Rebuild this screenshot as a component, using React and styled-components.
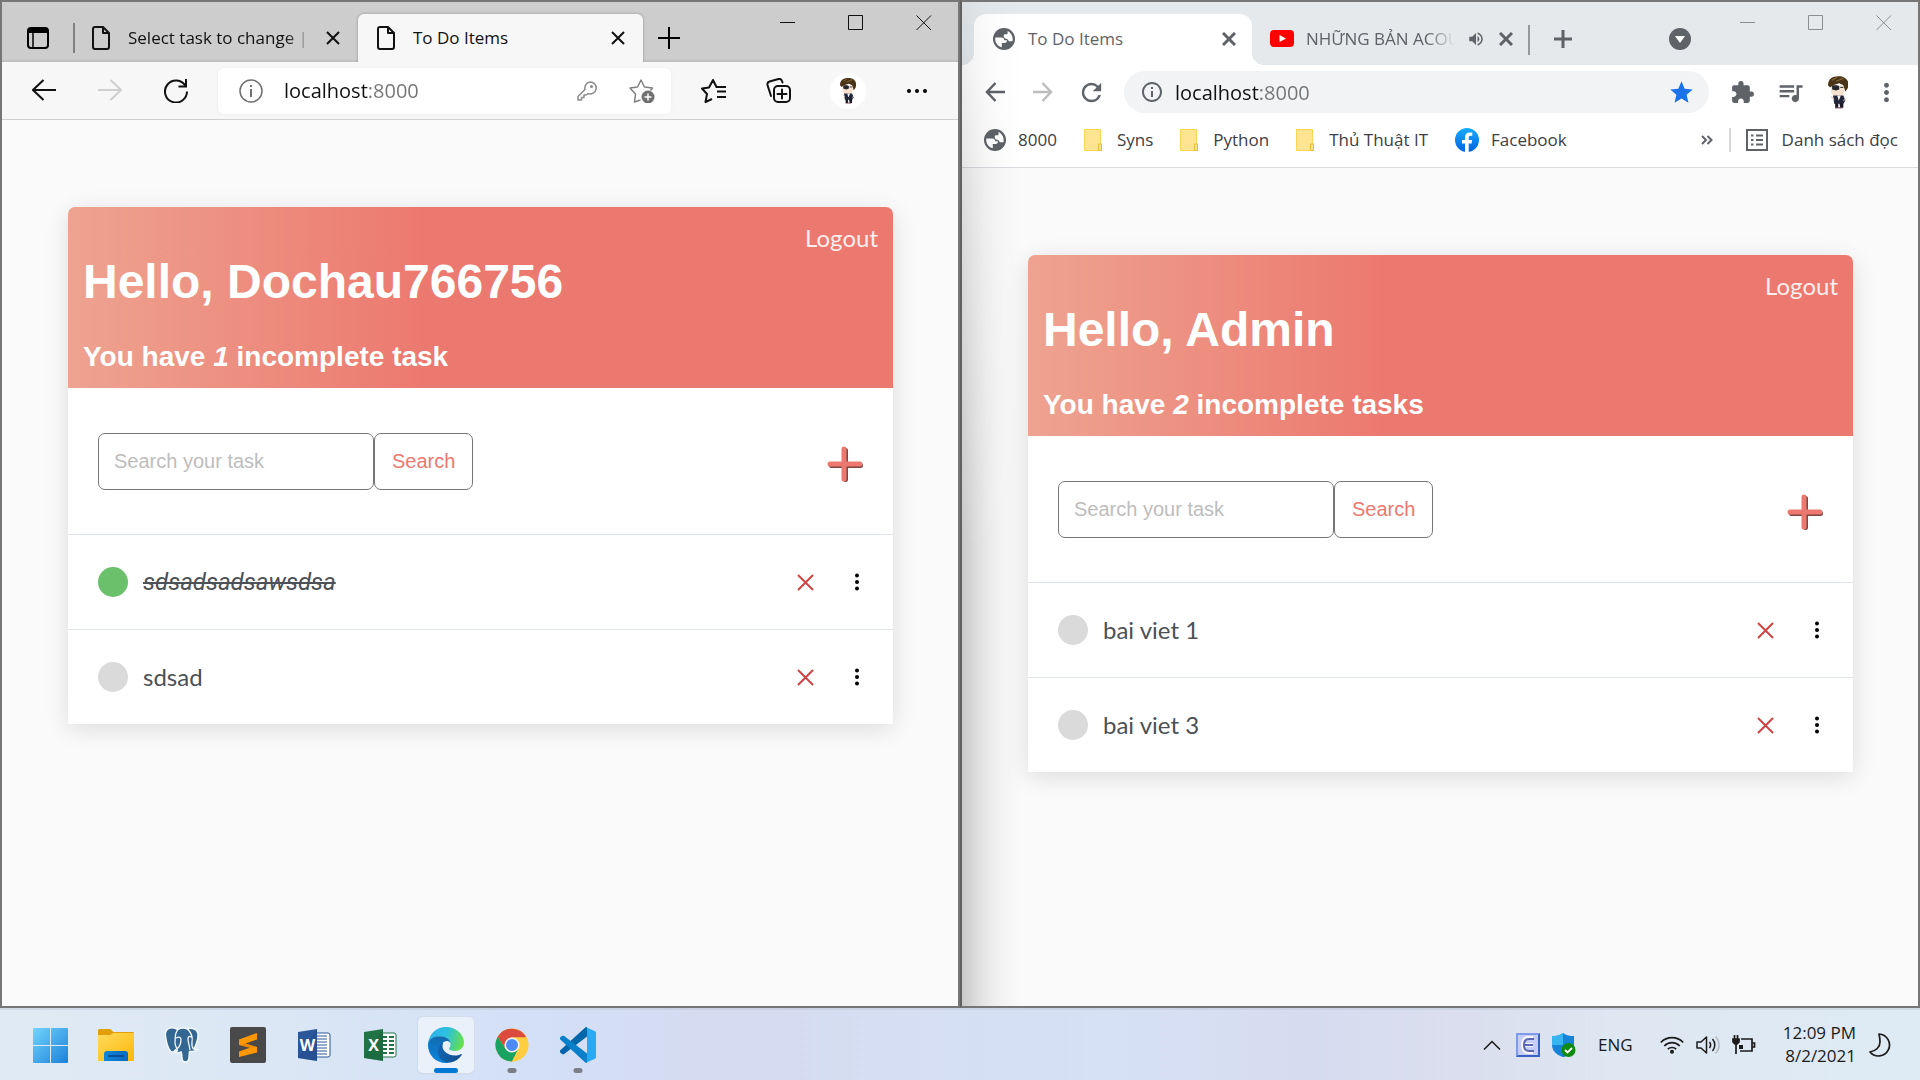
import React from 'react';
import styled, { createGlobalStyle, css } from 'styled-components';
import {
  MdInfoOutline, MdStar, MdExtension, MdQueueMusic, MdMoreVert, MdRefresh, MdVolumeUp,
} from 'react-icons/md';

const uiFont = '"Open Sans", "Noto Sans", sans-serif';
const headingFont = '"Liberation Sans", Arial, sans-serif';
const bodyFont = 'Lato, "Open Sans", sans-serif';

const GlobalStyle = createGlobalStyle`
  *, *::before, *::after { box-sizing: border-box; }
  body { margin: 0; font-family: ${uiFont}; background: #fafafa; }
  button, input { font: inherit; color: inherit; }
  button { border: 0; background: none; padding: 0; cursor: pointer; }
  svg { display: block; flex: none; }
  h1, h2 { margin: 0; }
  a { color: inherit; text-decoration: none; }
`;

/* ---------- desktop ---------- */

const Desktop = styled.div`
  display: flex;
  flex-direction: column;
  min-height: 100vh;
`;

const Windows = styled.main`
  display: grid;
  grid-template-columns: 1fr 1fr;
  flex: 1;
`;

const Window = styled.section`
  position: relative;
  display: flex;
  flex-direction: column;
  min-width: 0;
  border: 2px solid #767676;
  background: #fafafa;
  ${(p) => p.$behind && css`
    border-left-color: #616161;
    &::after {
      content: '';
      position: absolute;
      inset: 0 auto 0 0;
      width: 60px;
      pointer-events: none;
      background: linear-gradient(90deg, rgba(0,0,0,.2), rgba(0,0,0,.13) 12px, rgba(0,0,0,.07) 24px, rgba(0,0,0,.03) 38px, transparent);
      mask-image: linear-gradient(rgba(0,0,0,.2), rgba(0,0,0,.6) 20%, #000 55%);
    }
  `}
`;

const IconButton = styled.button`
  display: flex;
  align-items: center;
  justify-content: center;
  flex: none;
  width: ${(p) => p.$w}px;
  height: 42px;
  color: ${(p) => p.$color || 'inherit'};
`;

const Controls = styled.div`
  display: flex;
  align-self: flex-start;
  margin-left: auto;
  color: ${(p) => p.$color};
`;

const TabTitle = styled.span`
  flex: 1;
  min-width: 0;
  white-space: nowrap;
  font-size: 17px;
  line-height: 24px;
  text-align: left;
  ${(p) => p.$fade && css`mask-image: linear-gradient(90deg, #000 calc(100% - 28px), transparent);`}
`;

const TabClose = styled.button`
  display: flex;
  align-items: center;
  justify-content: center;
  flex: none;
  width: 18px;
  height: 18px;
`;

const Address = styled.form`
  display: flex;
  align-items: center;
  flex: 1;
  min-width: 0;
`;

const AddressInput = styled.input`
  flex: 1;
  min-width: 0;
  border: 0;
  outline: 0;
  padding: 0;
  height: 32px;
  font-size: 20px;
  background: linear-gradient(90deg, #111 ${(p) => p.$host}px, #747474 ${(p) => p.$host}px) text;
  -webkit-text-fill-color: transparent;
`;

/* ---------- Edge chrome ---------- */

const EdgeStrip = styled.header`
  display: flex;
  align-items: flex-end;
  height: 60px;
  background: #cdcdcd;
  box-shadow: inset 0 -2px 1px #c0c0c0;
`;

const EdgePanelButton = styled(IconButton)`
  height: 48px;
`;

const EdgeTab = styled.div`
  display: flex;
  align-items: center;
  gap: 17px;
  width: 285px;
  height: 48px;
  padding: 0 16px 0 18px;
  color: #111;
  ${(p) => p.$active && css`
    background: #f7f7f7;
    border-radius: 6px 6px 0 0;
    box-shadow: 0 0 3px rgba(0,0,0,.3);
    clip-path: inset(-4px -4px 0);
  `}
  ${(p) => p.$divided && css`
    background: linear-gradient(#808080, #808080) 0 9px / 2px 30px no-repeat;
  `}
`;

const EdgeTabTitle = styled(TabTitle)`
  margin-right: -6px;
`;

const EdgeToolbar = styled.nav`
  display: flex;
  align-items: center;
  height: 58px;
  padding: 0 8px 0 9px;
  background: #f7f7f7;
  border-bottom: 1px solid #d0d0d0;
  color: #111;
`;

const EdgeAddress = styled(Address)`
  height: 46px;
  margin: 0 9px;
  border-radius: 6px;
  background: #fff;
  box-shadow: 0 0 3px rgba(0,0,0,.06);
`;

const EdgeAvatar = styled.span`
  display: flex;
  align-items: center;
  justify-content: center;
  width: 36px;
  height: 36px;
  border-radius: 50%;
  background: #fff;
`;

/* ---------- Chrome chrome ---------- */

const ChromeStrip = styled.header`
  display: flex;
  align-items: flex-end;
  height: 63px;
  padding-left: 12px;
  background: #e5e9ec;
  color: #5f6368;
`;

const ChromeTab = styled.div`
  position: relative;
  display: flex;
  align-items: center;
  gap: 13px;
  width: 278px;
  height: 51px;
  padding: 0 14px 2px 19px;
  ${(p) => p.$active ? css`
    background: #fff;
    border-radius: 12px 12px 0 0;
    &::before, &::after {
      content: '';
      position: absolute;
      bottom: 0;
      width: 12px;
      height: 12px;
    }
    &::before { right: 100%; background: radial-gradient(circle at 0 0, transparent 12px, #fff 12px); }
    &::after { left: 100%; background: radial-gradient(circle at 100% 0, transparent 12px, #fff 12px); }
  ` : css`
    gap: 12px;
    padding: 0 15px 2px 18px;
    background: linear-gradient(#96999c, #96999c) 100% 11px / 2px 30px no-repeat;
  `}
`;

const ChromeStripButton = styled(IconButton)`
  height: 49px;
  margin: 0 0 2px ${(p) => p.$gap || 0}px;
`;

const ChromeToolbar = styled.nav`
  display: flex;
  align-items: center;
  height: 54px;
  padding: 0 8px 0 9px;
  background: #fff;
  color: #5f6368;
`;

const ChromeAddress = styled(Address)`
  gap: 11px;
  height: 42px;
  margin: 0 9px;
  padding: 0 16px;
  border-radius: 21px;
  background: #f1f3f4;
`;

const Bookmarks = styled.nav`
  display: flex;
  align-items: center;
  gap: 27px;
  height: 49px;
  padding: 0 20px 6px 22px;
  background: #fff;
  border-bottom: 1px solid #dadce0;
  color: #5f6368;
  white-space: nowrap;
`;

const Bookmark = styled.a`
  display: flex;
  align-items: center;
  gap: 12px;
  font-size: 17px;
  line-height: 24px;
`;

const BookmarkName = styled.span`
  color: #3c4043;
`;

const BookmarksEnd = styled.div`
  display: flex;
  align-items: center;
  gap: 16px;
  margin-left: auto;
`;

const ReadingList = styled(Bookmark)`
  gap: 14px;
  padding-left: 15px;
  border-left: 2px solid #d5d7da;
`;

/* ---------- to-do page ---------- */

const Page = styled.div`
  padding: 87px 65px 87px 66px;
  font-family: ${bodyFont};
  font-size: 24px;
  line-height: 34px;
  color: #4b5156;
`;

const Card = styled.article`
  border-radius: 7px 7px 0 0;
  background: #fff;
  box-shadow: 0 5px 24px rgba(0,0,0,.12);
`;

const CardHeader = styled.header`
  display: flex;
  justify-content: space-between;
  align-items: flex-start;
  padding: 15px;
  border-radius: 7px 7px 0 0;
  background: linear-gradient(90deg, #eea390 0%, #ec796f 43%, #ec796f 100%);
  color: #fff;
`;

const Greeting = styled.div`
  display: flex;
  flex-direction: column;
  gap: 32px;
  padding-top: 32px;
  font-family: ${headingFont};
`;

const Title = styled.h1`
  font-size: 48px;
  line-height: 55px;
`;

const Subtitle = styled.h2`
  font-size: 28px;
  line-height: 32px;
`;

const Logout = styled.a`
  line-height: 32px;
  color: #fbeeec;
`;

const SearchRow = styled.div`
  display: flex;
  align-items: center;
  justify-content: space-between;
  padding: 45px 30px 44px;
`;

const SearchForm = styled.form`
  display: flex;
  font-family: ${headingFont};
  font-size: 20px;
  line-height: 23px;
`;

const fieldBox = css`
  border: 1px solid #767676;
  border-radius: 7px;
  background: #fff;
`;

const SearchInput = styled.input`
  ${fieldBox}
  width: 276px;
  padding: 16px 15px;
  &::placeholder { color: #bdbdbd; }
`;

const SearchButton = styled.button`
  ${fieldBox}
  padding: 16px 17px;
  color: #ec796f;
`;

const AddLink = styled.a`
  display: flex;
  padding-top: 4px;
`;

const TaskList = styled.ul`
  list-style: none;
  margin: 0;
  padding: 0;
`;

const Task = styled.li`
  display: flex;
  align-items: center;
  gap: 15px;
  padding: 30px;
  border-top: 1px solid #dee4e9;
`;

const TaskCheck = styled.input`
  appearance: none;
  flex: none;
  width: 30px;
  height: 30px;
  margin: 0;
  border-radius: 50%;
  background: #dadada;
  &:checked { background: #6bc06b; }
`;

const TaskLabel = styled.label`
  flex: 1;
  ${(p) => p.$done && css`
    font-family: Roboto, ${bodyFont};
    font-style: italic;
    text-decoration: line-through;
    text-decoration-thickness: 2px;
  `}
`;

const TaskActions = styled.div`
  display: flex;
  align-items: center;
  gap: 37px;
`;

const TaskButton = styled.button`
  display: flex;
  align-items: center;
  justify-content: center;
  width: 18px;
  height: 30px;
  &:last-child { width: 12px; }
`;

/* ---------- taskbar ---------- */

const Taskbar = styled.footer`
  display: flex;
  align-items: center;
  justify-content: space-between;
  height: 72px;
  padding: 0 28px 0 22px;
  background: linear-gradient(90deg, #dfeaf4 0%, #dbe7f4 14%, #d3e0f7 27%, #d5dbf1 38%, #d5def2 46%, #d6e1f5 58%, #d6dcf0 68%, #dadeee 76%, #dee7f2 84%, #deebf4 100%);
  border-top: 2px solid rgba(190,200,215,.5);
  color: #1b1b1b;
`;

const Apps = styled.div`
  display: flex;
  gap: 10px;
`;

const AppButton = styled.button`
  position: relative;
  display: flex;
  align-items: center;
  justify-content: center;
  width: 56px;
  height: 56px;
  border-radius: 5px;
  ${(p) => p.$focused && css`
    background: #eaf1fb;
    box-shadow: 0 0 0 1px #d3dcea, 0 1px 1px #b9c4d4;
  `}
  ${(p) => p.$running && css`
    &::after {
      content: '';
      position: absolute;
      bottom: 0;
      left: 50%;
      translate: -50% 0;
      width: ${p.$focused ? 24 : 9}px;
      height: 5px;
      border-radius: 3px;
      background: ${p.$focused ? '#0078d4' : '#7b7f88'};
    }
  `}
`;

const Tray = styled.div`
  display: flex;
  align-items: center;
  gap: 12px;
`;

const TrayButton = styled.button`
  display: flex;
  align-items: center;
  padding-right: ${(p) => p.$space || 0}px;
`;

const Language = styled.button`
  padding: 0 15px 0 10px;
  font-size: 17px;
  line-height: 24px;
`;

const Clock = styled.time`
  padding: 0 0 2px 15px;
  text-align: right;
  font-size: 17px;
  line-height: 23px;
`;

/* ---------- drawings ---------- */

const Line = ({ w = 24, h = w, box = `0 0 ${w} ${h}`, sw = 2, children, ...rest }) => (
  <svg width={w} height={h} viewBox={box} fill="none" stroke="currentColor" strokeWidth={sw} aria-hidden="true" {...rest}>
    {children}
  </svg>
);

const Cross = ({ size, sw, color }) => (
  <Line w={size} sw={sw} stroke={color || 'currentColor'}>
    <path d={`M1 1 ${size - 1} ${size - 1} M${size - 1} 1 1 ${size - 1}`} />
  </Line>
);

const PageIcon = () => (
  <Line w={20} h={26}>
    <path d="M12 2H4a2 2 0 0 0-2 2v18a2 2 0 0 0 2 2h12a2 2 0 0 0 2-2V8zV8h6" strokeLinejoin="round" />
  </Line>
);

const GlobeIcon = () => (
  <svg width="22" height="22" viewBox="0 0 22 22" aria-hidden="true">
    <circle cx="11" cy="11" r="11" fill="#5f6368" />
    <path d="M2.300 9.500h6c1.800 0 3 1.200 3 2.700H14c0 2-1.200 2.800-3.500 2.800H8.800v4.300C4.500 18.300 1.600 14.200 2.300 9.500z" fill="#fff" />
    <path d="M14.500 2.900C17.500 4.200 19.700 7.500 19.700 11c0 .8-.1 1.500-.3 2.200h-3.600c-.8-1.800-1.800-2.700-3.800-2.700-1.500-1.300-1.700-3-.7-4.300h2.200c1 0 1.300-.7 1-3.300z" fill="#fff" />
  </svg>
);

const Avatar = ({ h }) => (
  <svg width={h * 0.62} height={h} viewBox="0 0 20 32" aria-hidden="true">
    <path d="M3 9h13v8l-3 3H6l-3-3z" fill="#f6e2cf" />
    <path d="M0 9C0 3 4 0 10 0s10 3 10 8c0 3-1 5-3 7l-2-6-4-2-6 2-3 2z" fill="#4a3418" />
    <path d="M4 4l5-3M8 5l7-3" stroke="#8a6a36" />
    <path d="M4 9h5l2 1v3l-3 1-4-1z" fill="#26282c" />
    <path d="M12 11h3" stroke="#26282c" />
    <path d="M5 19h10l2 5-2 3H6z" fill="#22263c" />
    <path d="M9 19l1.500 5 2-5z" fill="#f4f4f4" />
    <path d="M3 20l3 3M15 24l3-2" stroke="#e9c9b5" />
    <path d="M7 26h3v5H7zM11 26h4v5h-3z" fill="#1c1d26" />
    <path d="M7 31h7" stroke="#5a3340" />
  </svg>
);

const WindowControls = ({ color }) => (
  <Controls $color={color}>
    <IconButton $w={68} aria-label="Minimize"><Line w={16} sw={1}><path d="M0 7.500h15" /></Line></IconButton>
    <IconButton $w={68} aria-label="Maximize"><Line w={16} sw={1}><path d="M.5 .5h14v14H.5z" /></Line></IconButton>
    <IconButton $w={68} aria-label="Close"><Line w={16} sw={1}><path d="M.5 .5l14.500 14.500M15 .5L.5 15" /></Line></IconButton>
  </Controls>
);

const FolderIcon = () => (
  <svg width="21" height="22" viewBox="0 0 21 22" aria-hidden="true">
    <path d="M0 0h17v14h1v8H0z" fill="#ffe591" />
    <path d="M0 .5h16.500v13.500M.5 0v21.500h14" fill="none" stroke="#f8d653" />
    <path d="M14.500 21.500v-6.500h3v6.500z" fill="#ffe591" stroke="#e9bd2f" />
  </svg>
);

const YoutubeIcon = () => (
  <svg width="24" height="17" viewBox="0 0 24 17" aria-hidden="true">
    <rect width="24" height="17" rx="4" fill="#f00" />
    <path d="M9.500 5v7l6.500-3.500z" fill="#fff" />
  </svg>
);

const FacebookIcon = () => (
  <svg width="24" height="24" viewBox="0 0 24 24" aria-hidden="true">
    <defs>
      <linearGradient id="fb" x2="0" y2="1"><stop stopColor="#18acfe" /><stop offset="1" stopColor="#0163e0" /></linearGradient>
    </defs>
    <circle cx="12" cy="12" r="12" fill="url(#fb)" />
    <path d="M10 24v-8.500H7V12h3V9.400C10 6.300 11.800 4.600 14.600 4.600c1.300 0 2.700.2 2.700.2v3h-1.600c-1.500 0-2 .9-2 1.900V12h3.400l-.5 3.500h-2.900V24a12 12 0 0 1-3.700 0z" fill="#fff" />
  </svg>
);

const ListIcon = () => (
  <Line w={22}>
    <path d="M1 1h20v20H1z" />
    <path d="M5 6.500h2.500M10 6.500h7M5 11h2.500M10 11h7M5 15.500h2.500M10 15.500h7" />
  </Line>
);

const StartIcon = () => (
  <svg width="35" height="35" viewBox="0 0 35 35" aria-hidden="true">
    <defs>
      <linearGradient id="win" x2="1" y2="1"><stop stopColor="#72d5fd" /><stop offset="1" stopColor="#1a80d8" /></linearGradient>
    </defs>
    <path d="M1 0h16v17H0V1a1 1 0 0 1 1-1zM18 0h16a1 1 0 0 1 1 1v16H18zM0 18h17v17H1a1 1 0 0 1-1-1zM18 18h17v16a1 1 0 0 1-1 1H18z" fill="url(#win)" />
  </svg>
);

const ExplorerIcon = () => (
  <svg width="36" height="33" viewBox="0 0 36 33" aria-hidden="true">
    <defs>
      <linearGradient id="fold" x2="1" y2="1"><stop stopColor="#ffd95c" /><stop offset="1" stopColor="#fcb90a" /></linearGradient>
      <linearGradient id="tray" x2="1"><stop stopColor="#0f86d8" /><stop offset="1" stopColor="#0a6abf" /></linearGradient>
    </defs>
    <path d="M0 1.500A1.500 1.500 0 0 1 1.500 0H12l3.500 3H35a1 1 0 0 1 1 1v8H0z" fill="#e09f0b" />
    <path d="M0 6h12l3.500-2H35a1 1 0 0 1 1 1v26a1 1 0 0 1-1 1H1a1 1 0 0 1-1-1z" fill="url(#fold)" />
    <path d="M6 32v-7a3 3 0 0 1 3-3h18a3 3 0 0 1 3 3v7z" fill="url(#tray)" />
    <path d="M11 27h14" stroke="#0a4c96" strokeWidth="2" strokeLinecap="round" />
  </svg>
);

const PostgresIcon = () => (
  <svg width="36" height="36" viewBox="0 0 36 36" aria-hidden="true">
    <path d="M6 1C2 2 1 5 1.500 9c.6 5 2 11 4.500 14.500 1.500 2 3 2 4.500.5l1-1.200 2 1c-1 .5-2 1-2 1.500 1.500 1.200 4.500.5 5.500-.5 1.200 3 .5 6 1.500 8.500 1 2 5 2.300 6-.3.900-2.500.6-5.500 1-8.500 3 .3 6-.2 8-2-1.500.3-3 .3-3.500-.4C32.500 17 34.500 11 34 6.500 33 1.500 27 .5 23.500 2 20 .5 16.500.8 14 2.500 11.500 1 8.500.5 6 1z" fill="#336791" stroke="#f3f8fb" strokeWidth="1.500" strokeLinejoin="round" />
    <path d="M14 2.500C10.500 6 11.500 11 11 15.500c0 3 1.500 5 2.500 8M23.500 2c4 4 5.500 8 4.500 13-.3 2-.5 4.500 1.500 7M12 11c3-1.500 5-.8 5 1.500 0 3.500-.5 6-3.500 9M27.500 10c-2-1-3.500-.5-3.500 2 0 4 1.500 6 2 11" fill="none" stroke="#f3f8fb" strokeWidth="1.300" />
  </svg>
);

const SublimeIcon = () => (
  <svg width="36" height="36" viewBox="0 0 36 36" aria-hidden="true">
    <rect width="36" height="36" rx="2" fill="#494949" />
    <path d="M9 12.500 27 6v6.500l-11.500 4 11.500 3.500v5.500L9 30v-5.500l11-3.800L9 18z" fill="#ff9800" />
    <path d="M9 18l18-5.500-11.500 4L27 20l-7 .7z" fill="#e27d00" opacity=".5" />
  </svg>
);

const OfficeIcon = ({ color, dark, letter, sheet }) => (
  <svg width="33" height="32" viewBox="0 0 33 32" aria-hidden="true">
    <path d="M17 4h13a2 2 0 0 1 2 2v20a2 2 0 0 1-2 2H17z" fill="#fff" stroke={color} />
    {sheet
      ? <path d="M19 8h4M25 8h5M19 12h4M25 12h5M19 16h4M25 16h5M19 20h4M25 20h5M19 24h4M25 24h5" stroke={color} strokeWidth="2" />
      : <path d="M19 7h10M19 10h10M19 13h10M19 16h10M19 19h10M19 22h10M19 25h10" stroke={color} />}
    <path d="M0 3 19 0v32L0 29z" fill={color} />
    <path d="M0 29 19 0v32z" fill={dark} opacity=".35" />
    <text x="9.500" y="22" textAnchor="middle" fontFamily="Open Sans" fontWeight="700" fontSize="16" fill="#fff">{letter}</text>
  </svg>
);

const EdgeIcon = () => (
  <svg width="36" height="36" viewBox="0 0 36 36" aria-hidden="true">
    <defs>
      <linearGradient id="eg" x1="0" y1=".3" x2="1" y2=".5"><stop stopColor="#2fb0ee" /><stop offset=".5" stopColor="#2dc1dd" /><stop offset="1" stopColor="#66e04a" /></linearGradient>
      <linearGradient id="eb" x1=".6" x2=".3" y2="1"><stop stopColor="#1268ad" /><stop offset="1" stopColor="#0a85dc" /></linearGradient>
      <linearGradient id="ed" x2="1"><stop stopColor="#1263b0" /><stop offset="1" stopColor="#114a8b" /></linearGradient>
    </defs>
    <path d="M0 17C1 7 8 0 18 0s18 7.500 18 15.500c0 5.500-4.500 8.500-9 8.500-4 0-6-1-6-2.200 0-1 1.500-1.600 1.500-4.300 0-4-4-8-10-8C6 9.500 1.500 12.500 0 17z" fill="url(#eg)" />
    <path d="M0 18C0 12.500 6 9.200 12 9.200c5.500 0 10 3.300 10.500 6.800-1-1.500-2.500-2-4-2-3 0-6 3.500-6 8.500 0 7 5 12.500 9 13.200C20 36 19 36 18 36 7.500 36 0 28 0 18z" fill="url(#eb)" />
    <path d="M14 16c-4 4-5.500 10-2 15 2.500 3.500 7 5 10.500 4.500 5-1 9-4 11.200-7.500.5-.8-.1-1.300-.9-.8-2 1-4 1.300-6 1.300-7 0-11.800-4.500-12.300-8.500-.1-1.500.2-3 .8-4.500z" fill="url(#ed)" />
  </svg>
);

const ChromeIcon = () => (
  <svg width="34" height="34" viewBox="0 0 34 34" aria-hidden="true">
    <circle cx="17" cy="17" r="16.500" fill="#ffcd40" />
    <path d="M17 9.500h14.400A16.500 16.500 0 0 0 2.700 8.700L10.500 20.800 13 11z" fill="#db4a3c" />
    <path d="M2.700 8.700A16.500 16.500 0 0 0 17 33.500l6.500-12.700L17 17l-6.500 3.700z" fill="#1aa260" />
    <path d="M31.400 9.500A16.500 16.500 0 0 1 17 33.500l6.500-12.700L24.500 17 17 9.500z" fill="#ffcd40" />
    <circle cx="17" cy="17" r="7.600" fill="#f3f3f3" />
    <circle cx="17" cy="17" r="6" fill="#4c8bf5" />
  </svg>
);

const CodeIcon = () => (
  <svg width="36" height="36" viewBox="0 0 36 36" aria-hidden="true">
    <path d="M0 23.500c-.5.700-.4 1.500.3 2.100L2 27c.7.500 1.500.5 2.200 0L27 9.500V0c-1 0-1.500.3-2 .8z" fill="#0065a9" />
    <path d="M0 12.300c-.5-.7-.4-1.500.3-2.100L2 9c.7-.5 1.500-.5 2.200 0L27 26.500V36c-1 0-1.500-.3-2-.8z" fill="#0a7fca" />
    <path d="M26 .3 34.500 4c1 .5 1.500 1.200 1.500 2v24c0 .8-.5 1.500-1.500 2L26 35.700c.7-.4 1-1 1-1.700V2c0-.7-.3-1.300-1-1.700z" fill="#29a9f2" />
  </svg>
);

const ShieldIcon = () => (
  <svg width="24" height="24" viewBox="0 0 24 24" aria-hidden="true">
    <path d="M11 0c3 2.500 7 3 11 3v9c0 6-5 10-11 12C5 22 0 18 0 12V3c4 0 8-.5 11-3z" fill="#1583d8" />
    <path d="M11 0v12H0V3c4 0 8-.5 11-3z" fill="#35b4f0" />
    <path d="M11 12h11c0 6-5 10-11 12z" fill="#0f6cbd" />
    <circle cx="16.500" cy="17" r="7" fill="#0f8a12" />
    <path d="M13 17l2.500 2.500 4.500-4.500" fill="none" stroke="#fff" strokeWidth="1.800" />
  </svg>
);

const KeyboardIcon = () => (
  <svg width="24" height="24" viewBox="0 0 24 24" aria-hidden="true">
    <rect width="24" height="24" fill="#3a62c4" />
    <path d="M0 0h24l-2 2H2v20l-2 2z" fill="#7f9ae8" />
    <rect x="2" y="2" width="20" height="20" fill="#c3cdf6" />
    <path d="M17 5h-5c-3 0-5 2-5 7s2 7 5 7h5M7 12h10" fill="none" stroke="#f6f3fd" strokeWidth="4" />
    <path d="M18 6h-5c-3 0-5 2-5 6s2 6 5 6h5M8 12h9" fill="none" stroke="#5a68ae" strokeWidth="2" />
  </svg>
);

/* ---------- views ---------- */

const TodoPage = ({ id, name, count, tasks }) => (
  <Page>
    <Card>
      <CardHeader>
        <Greeting>
          <Title>Hello, {name}</Title>
          <Subtitle>You have <em>{count}</em> incomplete task{count > 1 ? 's' : ''}</Subtitle>
        </Greeting>
        <Logout href="#logout">Logout</Logout>
      </CardHeader>
      <SearchRow>
        <SearchForm onSubmit={(e) => e.preventDefault()}>
          <SearchInput type="text" placeholder="Search your task" aria-label="Search your task" />
          <SearchButton type="submit">Search</SearchButton>
        </SearchForm>
        <AddLink href="#create" aria-label="Add task">
          <svg width="36" height="36" viewBox="0 0 36 36" fill="none" strokeWidth="5" strokeLinecap="round" aria-hidden="true">
            <path d="M18.500 4.500v29M4.500 19.500h29" stroke="#7d4640" />
            <path d="M17 3v30M3 18h30" stroke="#ec796f" />
          </svg>
        </AddLink>
      </SearchRow>
      <TaskList>
        {tasks.map((task, i) => (
          <Task key={task.title}>
            <TaskCheck type="checkbox" id={`${id}-${i}`} defaultChecked={task.done} />
            <TaskLabel htmlFor={`${id}-${i}`} $done={task.done}>{task.title}</TaskLabel>
            <TaskActions>
              <TaskButton aria-label="Delete task"><Cross size={17} sw={2} color="#cf4545" /></TaskButton>
              <TaskButton aria-label="Task menu">
                <svg width="4" height="18" viewBox="0 0 4 18" aria-hidden="true">
                  <circle cx="2" cy="2.500" r="2" /><circle cx="2" cy="9" r="2" /><circle cx="2" cy="15.500" r="2" />
                </svg>
              </TaskButton>
            </TaskActions>
          </Task>
        ))}
      </TaskList>
    </Card>
  </Page>
);

const EdgeWindow = () => (
  <Window>
    <EdgeStrip>
      <EdgePanelButton $w={71} aria-label="Tab actions">
        <Line w={22}>
          <rect x="1" y="1" width="20" height="20" rx="3" />
          <path d="M6 6v15" strokeWidth="1.500" />
          <path d="M2 4h18" strokeWidth="4" />
        </Line>
      </EdgePanelButton>
      <EdgeTab $divided>
        <PageIcon />
        <EdgeTabTitle $fade>Select task to change | D</EdgeTabTitle>
        <TabClose aria-label="Close tab"><Cross size={14} sw={2} /></TabClose>
      </EdgeTab>
      <EdgeTab $active>
        <PageIcon />
        <EdgeTabTitle>To Do Items</EdgeTabTitle>
        <TabClose aria-label="Close tab"><Cross size={14} sw={2} /></TabClose>
      </EdgeTab>
      <EdgePanelButton $w={52} aria-label="New tab">
        <Line w={22}><path d="M11 0v22M0 11h22" /></Line>
      </EdgePanelButton>
      <WindowControls color="#111" />
    </EdgeStrip>
    <EdgeToolbar>
      <IconButton $w={66} aria-label="Back"><Line w={24}><path d="M24 11H1M11.500 1 1 11l10.500 10" /></Line></IconButton>
      <IconButton $w={66} $color="#cfcfcf" aria-label="Forward"><Line w={24}><path d="M0 11h23M12.500 1 23 11 12.500 21" /></Line></IconButton>
      <IconButton $w={66} aria-label="Reload">
        <Line w={24}><path d="M23 12.500A11 11 0 1 1 21.500 7M22 0v7.500h-7.500" /></Line>
      </IconButton>
      <EdgeAddress onSubmit={(e) => e.preventDefault()}>
        <IconButton type="button" $w={66} $color="#707070" aria-label="Site information">
          <Line w={24} sw={1.5}><circle cx="12" cy="12" r="11" /><path d="M12 10v8M12 6v2" strokeWidth="2" /></Line>
        </IconButton>
        <AddressInput $host={84} type="text" defaultValue="localhost:8000" aria-label="Address" />
        <IconButton type="button" $w={52} $color="#8a8a8a" aria-label="Passwords">
          <Line w={20} sw={1.5} strokeLinejoin="round">
            <path d="M13 1a6 6 0 1 1-2 11.600L9 14H7v2.500H4.500V19H1v-3.500l7-7A6.200 6.200 0 0 1 13 1z" /><circle cx="14.500" cy="5.500" r=".8" />
          </Line>
        </IconButton>
        <IconButton type="button" $w={58} $color="#808080" aria-label="Add to favorites">
          <Line w={26} h={24} sw={1.5} strokeLinejoin="round">
            <path d="M11.500 21 5.500 23l1-8L1 9l7.500-1L12 1l3.500 7 8 1-2 2.500" />
            <circle cx="19" cy="18" r="6.500" fill="#707070" stroke="none" /><path d="M19 14.500v7M15.500 18h7" stroke="#fff" />
          </Line>
        </IconButton>
      </EdgeAddress>
      <IconButton $w={66} aria-label="Favorites">
        <Line w={25} h={24} strokeLinejoin="round"><path d="M11 20l-6.500 3 1.500-8L1 9.500 8 8.500 12 1l3.500 7H25M16 12.500h9M16 18h9" /></Line>
      </IconButton>
      <IconButton $w={66} aria-label="Collections">
        <Line w={26} strokeLinecap="round">
          <rect x="8" y="8" width="16" height="16" rx="4" /><path d="M16 11.500v9M11.500 16h9M5 18 1.500 7A3 3 0 0 1 3.500 3.500l9-2.500A3 3 0 0 1 16 3l.5 1.500" />
        </Line>
      </IconButton>
      <IconButton $w={72} aria-label="Profile"><EdgeAvatar><Avatar h={26} /></EdgeAvatar></IconButton>
      <IconButton $w={66} aria-label="Settings and more">
        <svg width="20" height="4" viewBox="0 0 20 4" aria-hidden="true"><circle cx="2" cy="2" r="2" /><circle cx="10" cy="2" r="2" /><circle cx="18" cy="2" r="2" /></svg>
      </IconButton>
    </EdgeToolbar>
    <TodoPage id="edge" name="Dochau766756" count={1} tasks={[{ title: 'sdsadsadsawsdsa', done: true }, { title: 'sdsad' }]} />
  </Window>
);

const ChromeWindow = () => (
  <Window $behind>
    <ChromeStrip>
      <ChromeTab $active>
        <GlobeIcon />
        <TabTitle>To Do Items</TabTitle>
        <TabClose aria-label="Close tab"><Cross size={14} sw={3} /></TabClose>
      </ChromeTab>
      <ChromeTab>
        <YoutubeIcon />
        <TabTitle $fade>NHỮNG BẢN ACOU</TabTitle>
        <MdVolumeUp size={18} />
        <TabClose aria-label="Close tab"><Cross size={14} sw={3} /></TabClose>
      </ChromeTab>
      <ChromeStripButton $w={22} $gap={22} aria-label="New tab"><Line w={18} sw={3}><path d="M9 0v18M0 9h18" /></Line></ChromeStripButton>
      <ChromeStripButton $w={22} $gap={95} aria-label="Search tabs">
        <svg width="22" height="22" viewBox="0 0 22 22" aria-hidden="true"><circle cx="11" cy="11" r="11" fill="#5f6368" /><path d="M6 8h10l-5 7z" fill="#fff" /></svg>
      </ChromeStripButton>
      <WindowControls color="#8b8e91" />
    </ChromeStrip>
    <ChromeToolbar>
      <IconButton $w={48} aria-label="Back"><Line w={20} sw={2.5}><path d="M20 10H2M10.500 1 2 10l8.500 9" /></Line></IconButton>
      <IconButton $w={48} $color="#bbbdbf" aria-label="Forward"><Line w={20} sw={2.5}><path d="M0 10h18M9.500 1 18 10l-8.500 9" /></Line></IconButton>
      <IconButton $w={48} aria-label="Reload"><MdRefresh size={29} /></IconButton>
      <ChromeAddress onSubmit={(e) => e.preventDefault()}>
        <MdInfoOutline size={24} />
        <AddressInput $host={84} type="text" defaultValue="localhost:8000" aria-label="Address" />
        <IconButton type="button" $w={24} $color="#1a73e8" aria-label="Edit bookmark"><MdStar size={27} /></IconButton>
      </ChromeAddress>
      <IconButton $w={48} aria-label="Extensions"><MdExtension size={25} /></IconButton>
      <IconButton $w={48} aria-label="Media controls"><MdQueueMusic size={29} /></IconButton>
      <IconButton $w={48} aria-label="Profile"><Avatar h={33} /></IconButton>
      <IconButton $w={48} aria-label="Menu"><MdMoreVert size={29} /></IconButton>
    </ChromeToolbar>
    <Bookmarks>
      <Bookmark href="#8000"><GlobeIcon /><BookmarkName>8000</BookmarkName></Bookmark>
      <Bookmark href="#syns"><FolderIcon /><BookmarkName>Syns</BookmarkName></Bookmark>
      <Bookmark href="#python"><FolderIcon /><BookmarkName>Python</BookmarkName></Bookmark>
      <Bookmark href="#it"><FolderIcon /><BookmarkName>Thủ Thuật IT</BookmarkName></Bookmark>
      <Bookmark href="#facebook"><FacebookIcon /><BookmarkName>Facebook</BookmarkName></Bookmark>
      <BookmarksEnd>
        <TrayButton aria-label="More bookmarks"><Line w={12} h={10}><path d="M1 1l4 4-4 4M6.500 1l4 4-4 4" /></Line></TrayButton>
        <ReadingList href="#reading"><ListIcon /><BookmarkName>Danh sách đọc</BookmarkName></ReadingList>
      </BookmarksEnd>
    </Bookmarks>
    <TodoPage id="chrome" name="Admin" count={2} tasks={[{ title: 'bai viet 1' }, { title: 'bai viet 3' }]} />
  </Window>
);

const App = () => (
  <>
    <GlobalStyle />
    <Desktop>
      <Windows>
        <EdgeWindow />
        <ChromeWindow />
      </Windows>
      <Taskbar>
        <Apps>
          <AppButton aria-label="Start"><StartIcon /></AppButton>
          <AppButton aria-label="File Explorer"><ExplorerIcon /></AppButton>
          <AppButton aria-label="PostgreSQL"><PostgresIcon /></AppButton>
          <AppButton aria-label="Sublime Text"><SublimeIcon /></AppButton>
          <AppButton aria-label="Word"><OfficeIcon color="#2b579a" dark="#1e4683" letter="W" /></AppButton>
          <AppButton aria-label="Excel"><OfficeIcon color="#217346" dark="#185c37" letter="X" sheet /></AppButton>
          <AppButton $running $focused aria-label="Microsoft Edge"><EdgeIcon /></AppButton>
          <AppButton $running aria-label="Google Chrome"><ChromeIcon /></AppButton>
          <AppButton $running aria-label="Visual Studio Code"><CodeIcon /></AppButton>
        </Apps>
        <Tray>
          <TrayButton $space={3} aria-label="Show hidden icons"><Line w={18} h={10} sw={1.5}><path d="M1 9.500 9 1.500l8 8" /></Line></TrayButton>
          <TrayButton aria-label="Unikey"><KeyboardIcon /></TrayButton>
          <TrayButton aria-label="Windows Security"><ShieldIcon /></TrayButton>
          <Language>ENG</Language>
          <TrayButton aria-label="Network">
            <Line w={24} h={18} sw={1.7}>
              <path d="M.8 6.500a15.500 15.500 0 0 1 22.400 0M4.300 10a10.600 10.600 0 0 1 15.400 0M7.800 13.200a6 6 0 0 1 8.400 0" /><circle cx="12" cy="15.800" r="2" fill="currentColor" stroke="none" />
            </Line>
          </TrayButton>
          <TrayButton aria-label="Volume">
            <Line w={24} h={20} sw={1.5} strokeLinejoin="round">
              <path d="M1 7v6h4l5.500 5V2L5 7zM13.500 7a5 5 0 0 1 0 6M16.500 4a9 9 0 0 1 0 12" /><path d="M19.500 1.500a12 12 0 0 1 0 17" stroke="#b3bac2" />
            </Line>
          </TrayButton>
          <TrayButton aria-label="Battery">
            <Line w={24} h={20} sw={1.7}>
              <path d="M9 4h11v12H8M20.500 8h2v4h-2" /><path d="M1 4h6v3L5 9H3L1 7zM2.500 0v4M5.500 0v4M4 9v10" fill="currentColor" /><path d="M7 10h4v4H7z" fill="currentColor" stroke="none" />
            </Line>
          </TrayButton>
          <Clock>12:09 PM<br />8/2/2021</Clock>
          <TrayButton aria-label="Focus assist">
            <Line w={24} h={24} sw={1.7} strokeLinejoin="round"><path d="M11 1a11 11 0 1 1-9 18c6-1 10-5 10-10 0-3-.5-6-1-8z" /></Line>
          </TrayButton>
        </Tray>
      </Taskbar>
    </Desktop>
  </>
);

export default App;
